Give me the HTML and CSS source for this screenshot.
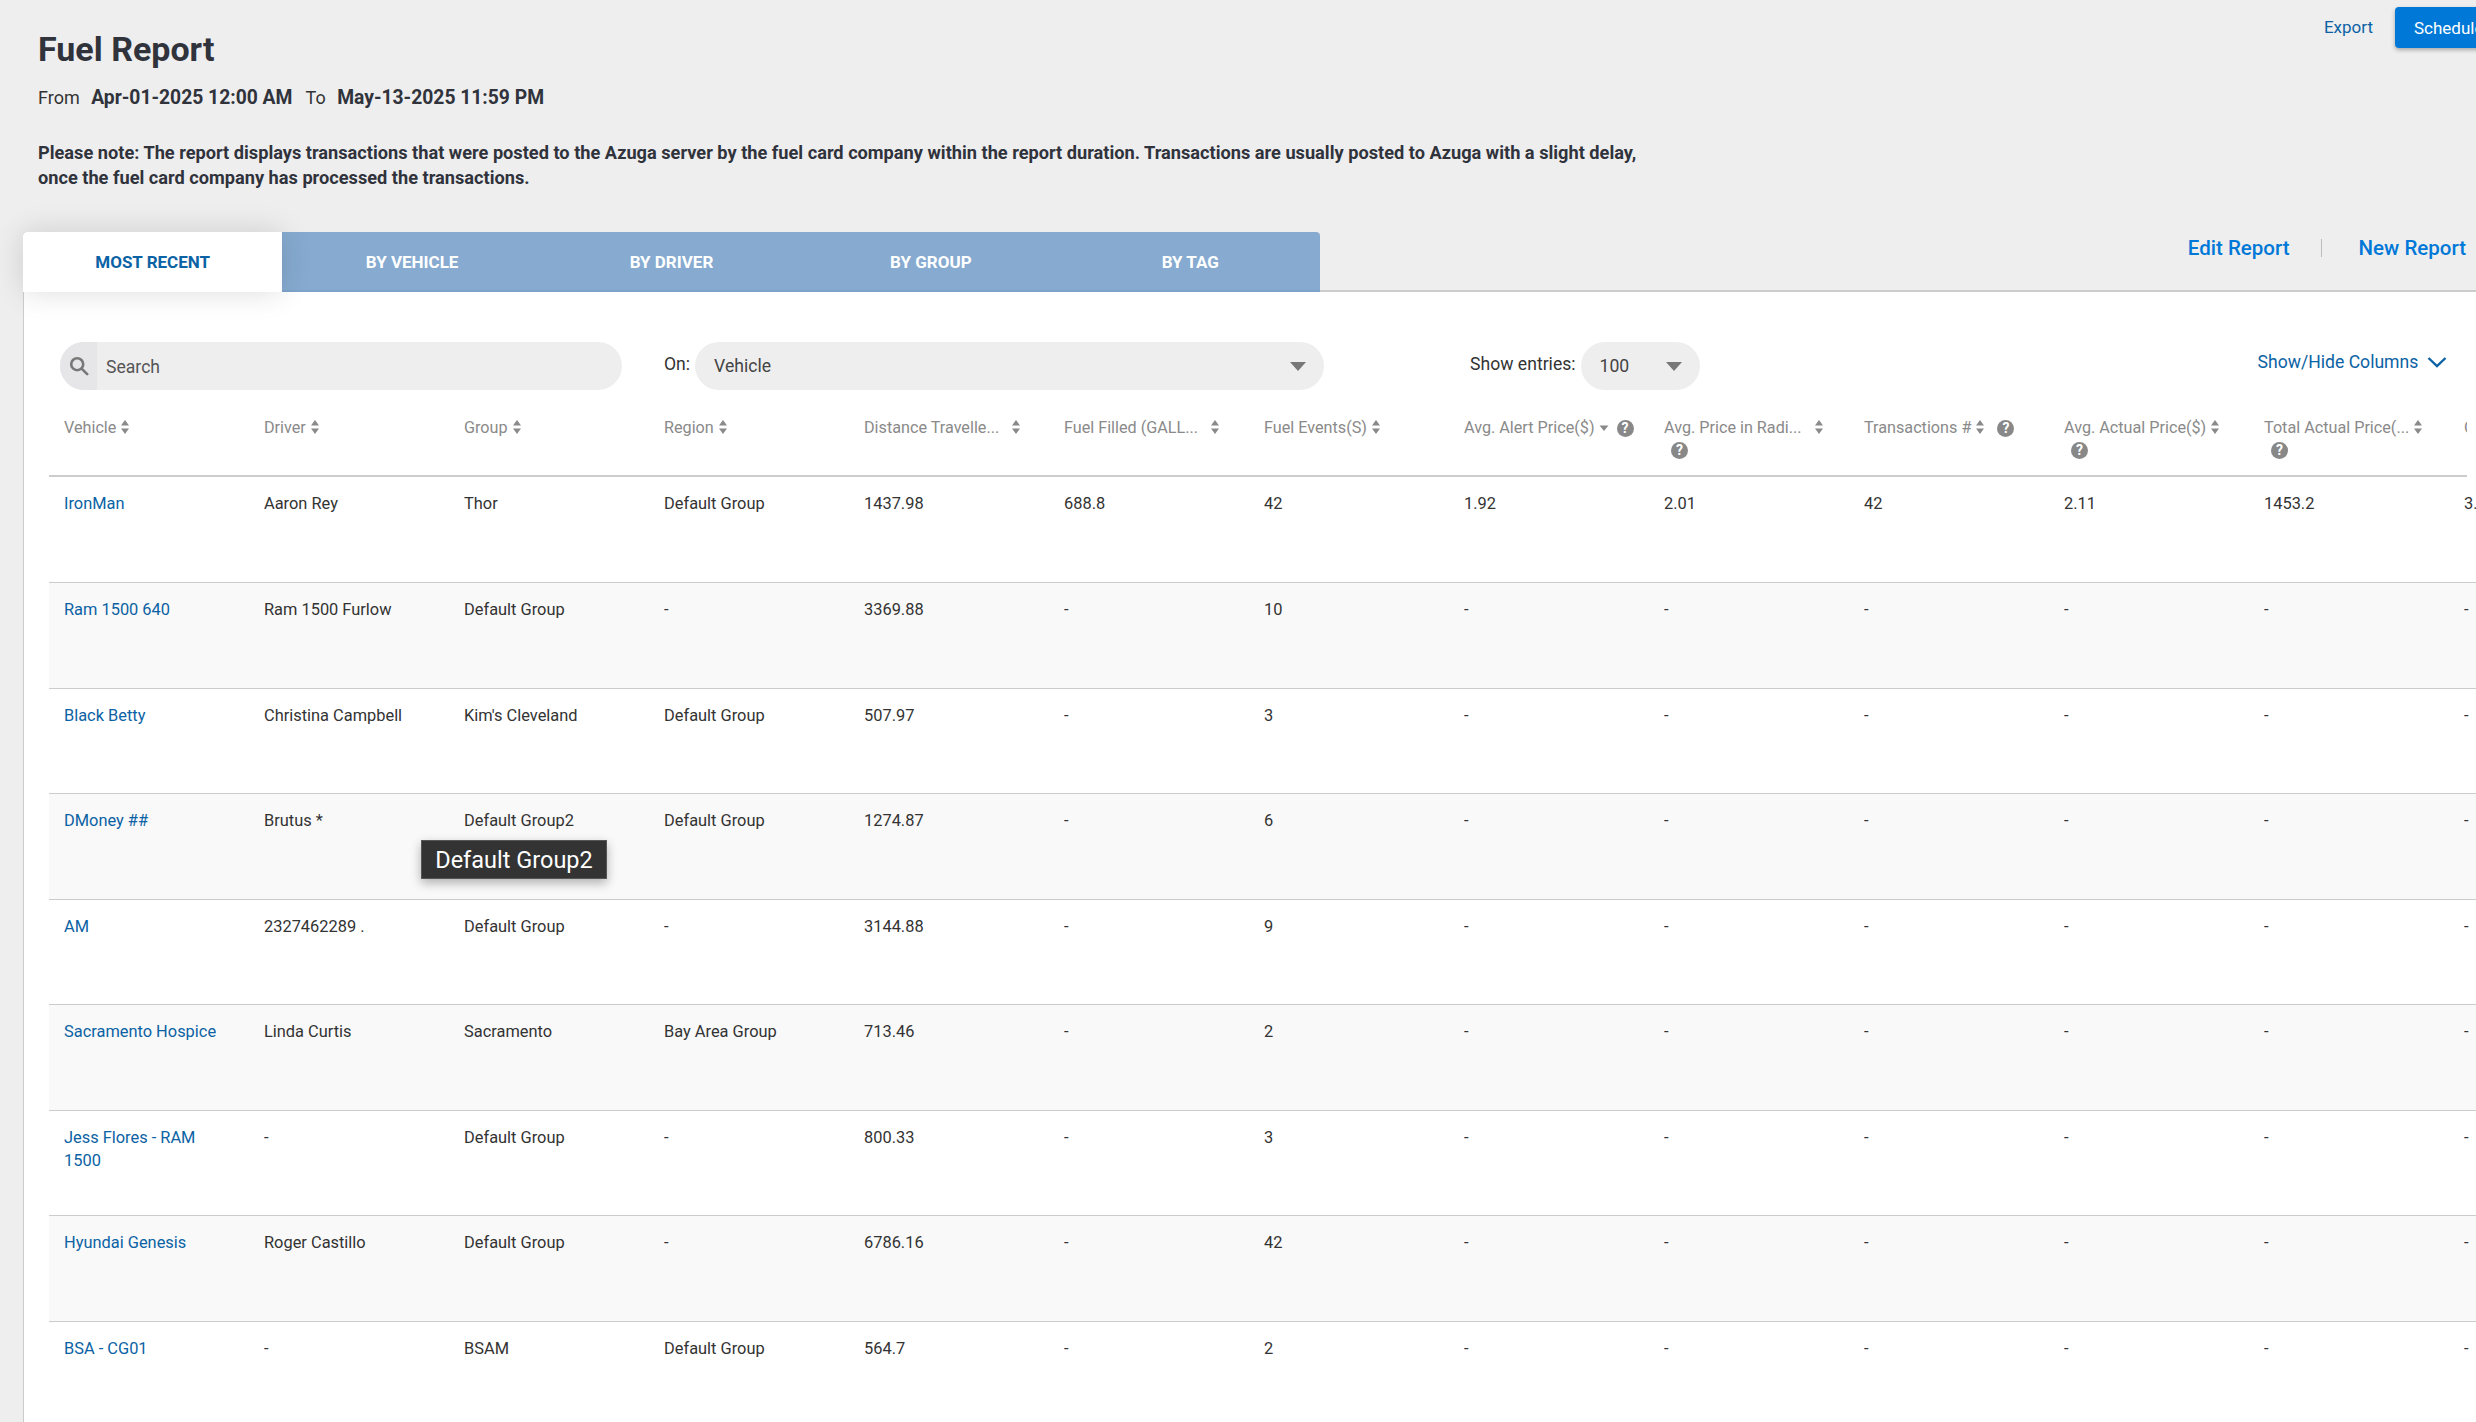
FILE: index.html
```html
<!DOCTYPE html>
<html lang="en">

  <head>
    <meta charset="UTF-8">
    <meta name="viewport" content="width=device-width, initial-scale=1.0">
    <title>Fuel Report</title>
    <link rel="stylesheet" href="styles.css">
  </head>

  <body>
    <svg class="sprite" width="0" height="0">
      <symbol id="sort" viewBox="0 0 10 16"><path d="M5 1l4 5.5H1zM5 15L1 9.5h8z"/></symbol>
      <symbol id="sortDown" viewBox="0 0 10 16"><path d="M5 12L.5 6.5h9z"/></symbol>
    </svg>

    <div class="head">
      <div class="head-text">
        <h1>Fuel Report</h1>
        <div class="range">From <b>Apr-01-2025 12:00 AM</b> To <b>May-13-2025 11:59 PM</b></div>
        <p class="note">Please note: The report displays transactions that were posted to the Azuga server by the fuel card company within the report duration. Transactions are usually posted to Azuga with a slight delay, once the fuel card company has processed the transactions.</p>
      </div>
      <div class="top-actions">
        <a class="export">Export</a>
        <button class="schedule">Schedule</button>
      </div>
    </div>

    <div class="tabbar">
      <div class="tabs">
        <div class="tab active">MOST RECENT</div>
        <div class="tab">BY VEHICLE</div>
        <div class="tab">BY DRIVER</div>
        <div class="tab">BY GROUP</div>
        <div class="tab">BY TAG</div>
      </div>
      <div class="report-links">
        <a>Edit Report</a>
        <span class="sep"></span>
        <a>New Report</a>
      </div>
    </div>

    <div class="panel">
      <div class="filters">
        <div class="search">
          <span class="search-icon">
            <svg width="20" height="20" viewBox="0 0 20 20" fill="none" stroke="#777" stroke-width="2.6"><circle cx="8.2" cy="8.2" r="6"/><path d="M12.6 12.6l5.6 5.6" stroke-linecap="round"/></svg>
          </span>
          <span class="search-text">Search</span>
        </div>
        <span class="filter-label on-label">On:</span>
        <div class="select on-select">Vehicle<i class="arrow"></i></div>
        <span class="filter-label entries-label">Show entries:</span>
        <div class="select entries-select">100<i class="arrow"></i></div>
        <a class="columns-link">Show/Hide Columns
          <svg width="20" height="12" viewBox="0 0 20 12" fill="none" stroke="#0b62a4" stroke-width="2.4"><path d="M1.5 2l8.5 8 8.5-8"/></svg>
        </a>
      </div>

      <div class="table-wrap">
        <div class="scroll-head">
          <table>
            <thead>
              <tr>
                <th>Vehicle<svg class="sort"><use href="#sort"/></svg></th>
                <th>Driver<svg class="sort"><use href="#sort"/></svg></th>
                <th>Group<svg class="sort"><use href="#sort"/></svg></th>
                <th>Region<svg class="sort"><use href="#sort"/></svg></th>
                <th>Distance Travelle...<svg class="sort far"><use href="#sort"/></svg></th>
                <th>Fuel Filled (GALL...<svg class="sort far"><use href="#sort"/></svg></th>
                <th>Fuel Events(S)<svg class="sort"><use href="#sort"/></svg></th>
                <th>Avg. Alert Price($)<svg class="sort"><use href="#sortDown"/></svg><span class="help near">?</span></th>
                <th>Avg. Price in Radi...<svg class="sort far"><use href="#sort"/></svg><span class="help below">?</span></th>
                <th>Transactions #<svg class="sort"><use href="#sort"/></svg><span class="help">?</span></th>
                <th>Avg. Actual Price($)<svg class="sort"><use href="#sort"/></svg><span class="help below">?</span></th>
                <th>Total Actual Price(...<svg class="sort"><use href="#sort"/></svg><span class="help below">?</span></th>
                <th>Cost</th>
              </tr>
            </thead>
          </table>
        </div>
        <table>
          <tbody>
            <tr>
              <td><a>IronMan</a></td><td>Aaron Rey</td><td>Thor</td><td>Default Group</td><td>1437.98</td><td>688.8</td><td>42</td><td>1.92</td><td>2.01</td><td>42</td><td>2.11</td><td>1453.2</td><td>3.1</td>
            </tr>
            <tr>
              <td><a>Ram 1500 640</a></td><td>Ram 1500 Furlow</td><td>Default Group</td><td>-</td><td>3369.88</td><td>-</td><td>10</td><td>-</td><td>-</td><td>-</td><td>-</td><td>-</td><td>-</td>
            </tr>
            <tr>
              <td><a>Black Betty</a></td><td>Christina Campbell</td><td>Kim's Cleveland</td><td>Default Group</td><td>507.97</td><td>-</td><td>3</td><td>-</td><td>-</td><td>-</td><td>-</td><td>-</td><td>-</td>
            </tr>
            <tr>
              <td><a>DMoney ##</a></td><td>Brutus *</td><td class="has-tip">Default Group2<span class="tip">Default Group2</span></td><td>Default Group</td><td>1274.87</td><td>-</td><td>6</td><td>-</td><td>-</td><td>-</td><td>-</td><td>-</td><td>-</td>
            </tr>
            <tr>
              <td><a>AM</a></td><td>2327462289 .</td><td>Default Group</td><td>-</td><td>3144.88</td><td>-</td><td>9</td><td>-</td><td>-</td><td>-</td><td>-</td><td>-</td><td>-</td>
            </tr>
            <tr>
              <td><a>Sacramento Hospice</a></td><td>Linda Curtis</td><td>Sacramento</td><td>Bay Area Group</td><td>713.46</td><td>-</td><td>2</td><td>-</td><td>-</td><td>-</td><td>-</td><td>-</td><td>-</td>
            </tr>
            <tr>
              <td><a>Jess Flores - RAM 1500</a></td><td>-</td><td>Default Group</td><td>-</td><td>800.33</td><td>-</td><td>3</td><td>-</td><td>-</td><td>-</td><td>-</td><td>-</td><td>-</td>
            </tr>
            <tr>
              <td><a>Hyundai Genesis</a></td><td>Roger Castillo</td><td>Default Group</td><td>-</td><td>6786.16</td><td>-</td><td>42</td><td>-</td><td>-</td><td>-</td><td>-</td><td>-</td><td>-</td>
            </tr>
            <tr>
              <td><a>BSA - CG01</a></td><td>-</td><td>BSAM</td><td>Default Group</td><td>564.7</td><td>-</td><td>2</td><td>-</td><td>-</td><td>-</td><td>-</td><td>-</td><td>-</td>
            </tr>
          </tbody>
        </table>
      </div>
    </div>
  </body>

</html>
```

FILE: styles.css
```css
html,
body {
  height: 100%;
}

body {
  font-family: Roboto, "Liberation Sans", sans-serif;
  background-color: #eeeeef;
  color: #333;
  margin: 0;
  overflow: hidden;
  font-size: 16px;
}

a {
  color: #0b62a4;
}

.sprite {
  position: absolute;
}

.head {
  display: flex;
  justify-content: space-between;
  height: 232px;
  padding-left: 38px;
}

.head-text {
  width: 1610px;
}

h1 {
  font-size: 34px;
  line-height: 40px;
  font-weight: 700;
  margin: 29px 0 0 0;
  color: #30333b;
}

.range {
  font-size: 18px;
  line-height: 24px;
  margin-top: 17px;
  word-spacing: 3px;
}

.range b {
  font-size: 19.3px;
  margin: 0 6px 0 4px;
  word-spacing: 0;
  color: #30333b;
}

.note {
  font-size: 18.2px;
  line-height: 25px;
  font-weight: 700;
  margin: 30px 0 0 0;
  color: #30333b;
}

.top-actions {
  display: flex;
  align-items: flex-start;
  flex-shrink: 0;
  margin-right: -40px;
  padding-top: 7px;
}

.export {
  font-size: 17px;
  line-height: 41px;
  margin-right: 22px;
}

.schedule {
  width: 121px;
  height: 41px;
  background-color: #0078d7;
  color: white;
  font-family: inherit;
  font-size: 17px;
  border: none;
  border-radius: 4px;
  text-align: left;
  padding-left: 19px;
  box-shadow: 0 2px 4px rgba(0, 0, 0, 0.3);
}

.tabbar {
  display: flex;
  justify-content: space-between;
  align-items: flex-start;
  height: 58px;
  margin-left: 23px;
  border-bottom: 2px solid #ccc;
}

.tabs {
  display: flex;
  height: 60px;
  background-color: #86aad0;
  border-bottom: 2px solid #7da3cc;
  box-sizing: border-box;
  border-radius: 4px 4px 0 0;
  position: relative;
  z-index: 1;
}

.tab {
  width: 259.4px;
  line-height: 60px;
  text-align: center;
  font-size: 17px;
  font-weight: 700;
  color: white;
}

.tab.active {
  background-color: white;
  color: #0b62a4;
  height: 60px;
  border-radius: 4px 0 0 0;
  box-shadow: 0 0 30px rgba(0, 0, 0, 0.14);
}

.report-links {
  display: flex;
  align-items: center;
  height: 32px;
  padding: 0 10px 0 0;
  font-size: 20.5px;
  font-weight: 500;
}

.report-links a {
  color: #0078d7;
}

.sep {
  width: 1px;
  height: 18px;
  background-color: #bbb;
  margin: 0 37px 0 31px;
}

.panel {
  background-color: white;
  border-left: 1px solid #ccc;
  margin-left: 23px;
  height: 1130px;
  overflow: hidden;
}

.filters {
  display: flex;
  align-items: center;
  height: 48px;
  margin-top: 50px;
  padding-left: 36px;
}

.search {
  display: flex;
  align-items: center;
  width: 562px;
  height: 48px;
  background-color: #eeeeef;
  border-radius: 24px;
  overflow: hidden;
}

.search-icon {
  display: flex;
  align-items: center;
  justify-content: center;
  width: 37px;
  height: 48px;
  background-color: #e6e6e8;
  margin-right: 9px;
}

.search-text {
  font-size: 17.6px;
  color: #555;
  margin-top: 1px;
}

.filter-label {
  font-size: 17.6px;
  margin-top: -4px;
}

.on-label {
  margin-left: 42px;
  margin-right: 5px;
}

.select {
  position: relative;
  height: 48px;
  line-height: 48px;
  background-color: #eeeeef;
  border-radius: 24px;
  font-size: 17.6px;
  padding-left: 19px;
  box-sizing: border-box;
  color: #444;
}

.on-select {
  width: 629px;
}

.entries-label {
  margin-left: 146px;
  margin-right: 5px;
}

.entries-select {
  width: 119px;
}

.arrow {
  position: absolute;
  right: 18px;
  top: 20px;
  border-left: 8px solid transparent;
  border-right: 8px solid transparent;
  border-top: 9px solid #777;
}

.columns-link {
  display: flex;
  align-items: center;
  gap: 9px;
  margin-left: 558px;
  white-space: nowrap;
  font-size: 17.6px;
  margin-top: -8px;
}

.table-wrap {
  margin-top: 9px;
  margin-left: 25px;
  width: 2600px;
}

.scroll-head {
  width: 2418px;
  overflow: hidden;
  border-bottom: 2px solid #ccc;
}

table {
  table-layout: fixed;
  width: 2600px;
  border-collapse: collapse;
}

th {
  width: 171px;
  height: 59px;
  padding: 17px 14px 0 15px;
  vertical-align: top;
  text-align: left;
  font-size: 16.2px;
  line-height: 23px;
  font-weight: 400;
  color: #8a8a8a;
  white-space: nowrap;
  overflow: hidden;
  box-sizing: content-box;
}

.sort {
  width: 10px;
  height: 16px;
  fill: #8a8a8a;
  margin-left: 4px;
  vertical-align: -2px;
}

.sort.far {
  margin-left: 12px;
}

.help {
  display: inline-block;
  width: 17px;
  height: 17px;
  line-height: 17px;
  border-radius: 50%;
  background-color: #888;
  color: white;
  font-size: 14px;
  font-weight: 700;
  text-align: center;
  margin-left: 12px;
}

.help.near {
  margin-left: 8px;
}

.help.below {
  display: block;
  margin: 3px 0 0 7px;
}

td {
  height: 105.5px;
  box-sizing: border-box;
  padding: 15px 24px 0 15px;
  vertical-align: top;
  font-size: 16.4px;
  line-height: 23px;
}

tbody tr {
  border-bottom: 1px solid #ccc;
}

tbody tr:nth-child(even) {
  background-color: #f9f9f9;
}

.has-tip {
  position: relative;
}

.tip {
  position: absolute;
  left: -28px;
  top: 46px;
  width: 186px;
  height: 39px;
  line-height: 39px;
  background-color: #333;
  border: 1px solid #555;
  box-sizing: border-box;
  color: white;
  font-size: 23.5px;
  text-align: center;
  box-shadow: 0 4px 10px rgba(0, 0, 0, 0.3);
}
```
